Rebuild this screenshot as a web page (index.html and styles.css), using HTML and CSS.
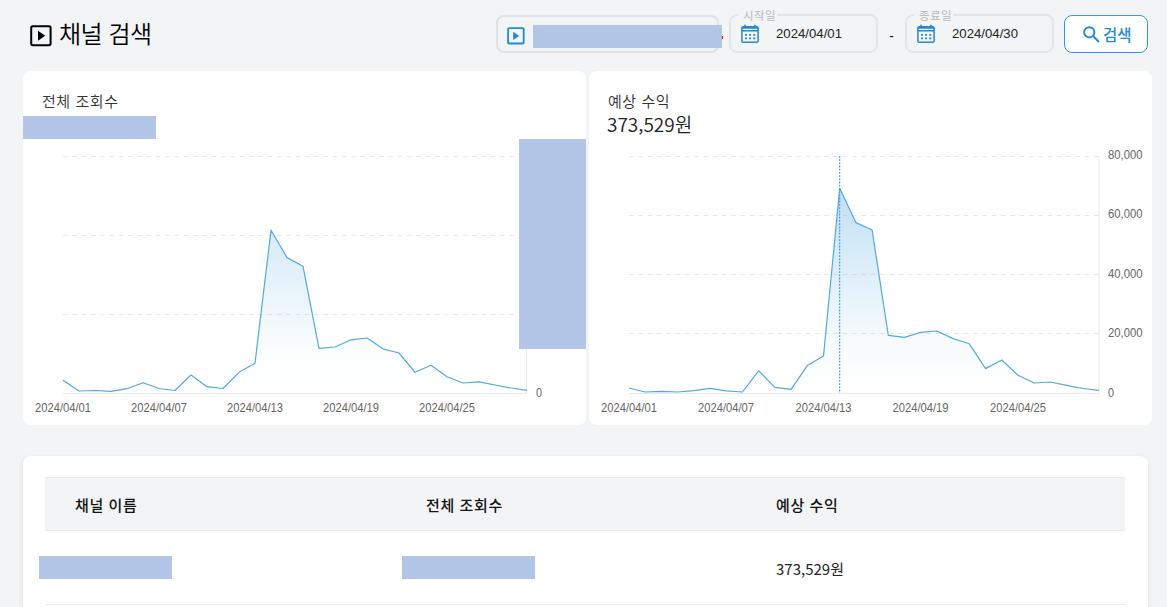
FILE: index.html
```html
<!DOCTYPE html>
<html lang="ko">
<head>
<meta charset="utf-8">
<title>채널 검색</title>
<link rel="stylesheet" href="styles.css">
</head>
<body>
<header class="topbar">
  <h1 class="title">
    <svg class="title-icon" width="22" height="22" viewBox="0 0 22 22"><rect x="1.2" y="1.2" width="19.4" height="19" rx="1.6" fill="none" stroke="#000" stroke-width="2"/><path d="M8 5.8v10l7.2-5z"/></svg>
    <span>채널 검색</span>
  </h1>
  <div class="filters">
    <div class="channel-field">
      <svg width="18" height="18" viewBox="0 0 18 18"><rect x="1.1" y="1.1" width="15.6" height="15.4" rx="1" fill="none" stroke="#2488d2" stroke-width="1.8"/><path d="M6.2 4.8v8.2l6-4.1z" fill="#2488d2"/></svg>
      <span class="mask channel-mask"></span>
      <i class="required"></i>
    </div>
    <fieldset class="date-field">
      <legend>시작일</legend>
      <svg width="18" height="20" viewBox="0 0 18 20"><use href="#calendar"/></svg>
      <span>2024/04/01</span>
    </fieldset>
    <span class="dash">-</span>
    <fieldset class="date-field">
      <legend>종료일</legend>
      <svg width="18" height="20" viewBox="0 0 18 20"><g id="calendar"><path d="M4 .8v3M14 .8v3" stroke="#2488d2" stroke-width="1.6"/><rect x=".9" y="2.7" width="16.2" height="15.6" rx="1.4" fill="none" stroke="#2488d2" stroke-width="1.5"/><path d="M1 3h16v1.7H1zM1 6h16v1.4H1z" fill="#2488d2"/><path d="M4 10.8h10.4M4 14.4h10.4" stroke="#2488d2" stroke-width="1.8" stroke-dasharray="2 2.1"/></g></svg>
      <span>2024/04/30</span>
    </fieldset>
    <button class="search">
      <svg width="17" height="17" viewBox="0 0 17 17" fill="none" stroke="#2488d2" stroke-width="2"><circle cx="6.3" cy="6.3" r="5.1"/><path d="M10 10l6 6"/></svg>
      <span>검색</span>
    </button>
  </div>
</header>

<section class="charts">
  <article class="card">
    <h2>전체 조회수</h2>
    <span class="mask total-mask"></span>
    <svg class="chart" width="563" height="284" viewBox="23 141 563 284">
      <defs><linearGradient id="views" gradientUnits="userSpaceOnUse" x1="0" y1="230" x2="0" y2="393"><stop offset="0" stop-color="#3498db" stop-opacity=".2"/><stop offset=".75" stop-color="#3498db" stop-opacity=".02"/><stop offset="1" stop-color="#3498db" stop-opacity="0"/></linearGradient></defs>
      <path class="grid" d="M63 156.5H527M63 235.5H527M63 314.5H527M63 393.5H527"/>
      <path class="axis" d="M526.5 156V393M63 393.5H527"/>
      <path fill="url(#views)" d="M63 380.3 79 391 95 390.5 111 391.4 127 388.7 143 382.7 159 388.5 175 390.5 191 375 207 386.7 223 388.5 239 372.3 255 363.3 271 230.2 287 257.6 303 266.3 319 348.3 335 347 351 339.8 367 338 383 348.8 399 353 415 372.3 431 365.3 447 376.7 463 383 479 381.8 495 385 511 388 527 390.3V393H63Z"/>
      <polyline class="line" points="63,380.3 79,391 95,390.5 111,391.4 127,388.7 143,382.7 159,388.5 175,390.5 191,375 207,386.7 223,388.5 239,372.3 255,363.3 271,230.2 287,257.6 303,266.3 319,348.3 335,347 351,339.8 367,338 383,348.8 399,353 415,372.3 431,365.3 447,376.7 463,383 479,381.8 495,385 511,388 527,390.3"/>
      <g class="labels">
        <text x="35" y="412" textLength="56" lengthAdjust="spacingAndGlyphs">2024/04/01</text>
        <text x="131" y="412" textLength="56" lengthAdjust="spacingAndGlyphs">2024/04/07</text>
        <text x="227" y="412" textLength="56" lengthAdjust="spacingAndGlyphs">2024/04/13</text>
        <text x="323" y="412" textLength="56" lengthAdjust="spacingAndGlyphs">2024/04/19</text>
        <text x="419" y="412" textLength="56" lengthAdjust="spacingAndGlyphs">2024/04/25</text>
        <text x="536" y="396.5" textLength="6" lengthAdjust="spacingAndGlyphs">0</text>
      </g>
    </svg>
    <span class="mask axis-mask"></span>
  </article>
  <article class="card">
    <h2>예상 수익</h2>
    <p class="amount">373,529원</p>
    <svg class="chart" width="563" height="284" viewBox="589 141 563 284">
      <defs><linearGradient id="revenue" gradientUnits="userSpaceOnUse" x1="0" y1="188" x2="0" y2="393"><stop offset="0" stop-color="#3498db" stop-opacity=".31"/><stop offset=".75" stop-color="#3498db" stop-opacity=".04"/><stop offset="1" stop-color="#3498db" stop-opacity="0"/></linearGradient></defs>
      <path class="grid" d="M629 156.5H1099M629 215.5H1099M629 274.5H1099M629 333.5H1099M629 393.5H1099"/>
      <path class="axis" d="M1099 156V393M629 393.5H1099"/>
      <path fill="url(#revenue)" d="M629 388 645.2 392 661.4 391.4 677.6 392 693.8 390.6 710 388.4 726.2 390.8 742.4 392 758.7 370.8 774.9 387.3 791.1 389.3 807.3 365.6 823.5 356 839.7 188.3 855.9 222.6 872.1 230 888.3 335.3 904.5 337.4 920.7 332.3 936.9 331 953.1 338.6 969.3 343.8 985.6 368.6 1001.8 360 1018 375.3 1034.2 383 1050.4 382 1066.6 385.3 1082.8 388.5 1099 390.3V393H629Z"/>
      <polyline class="line" points="629,388 645.2,392 661.4,391.4 677.6,392 693.8,390.6 710,388.4 726.2,390.8 742.4,392 758.7,370.8 774.9,387.3 791.1,389.3 807.3,365.6 823.5,356 839.7,188.3 855.9,222.6 872.1,230 888.3,335.3 904.5,337.4 920.7,332.3 936.9,331 953.1,338.6 969.3,343.8 985.6,368.6 1001.8,360 1018,375.3 1034.2,383 1050.4,382 1066.6,385.3 1082.8,388.5 1099,390.3"/>
      <path class="cursor" d="M839.6 156V393"/>
      <g class="labels">
        <text x="601" y="412" textLength="56" lengthAdjust="spacingAndGlyphs">2024/04/01</text>
        <text x="698" y="412" textLength="56" lengthAdjust="spacingAndGlyphs">2024/04/07</text>
        <text x="795.5" y="412" textLength="56" lengthAdjust="spacingAndGlyphs">2024/04/13</text>
        <text x="892.5" y="412" textLength="56" lengthAdjust="spacingAndGlyphs">2024/04/19</text>
        <text x="990" y="412" textLength="56" lengthAdjust="spacingAndGlyphs">2024/04/25</text>
        <text x="1108" y="159" textLength="34.5" lengthAdjust="spacingAndGlyphs">80,000</text>
        <text x="1108" y="218" textLength="34.5" lengthAdjust="spacingAndGlyphs">60,000</text>
        <text x="1108" y="278" textLength="34.5" lengthAdjust="spacingAndGlyphs">40,000</text>
        <text x="1108" y="337" textLength="34.5" lengthAdjust="spacingAndGlyphs">20,000</text>
        <text x="1108" y="396.5" textLength="6" lengthAdjust="spacingAndGlyphs">0</text>
      </g>
    </svg>
  </article>
</section>

<section class="table-card">
  <div class="row head"><span>채널 이름</span><span>전체 조회수</span><span>예상 수익</span></div>
  <div class="row"><span><i class="mask cell-mask name-mask"></i></span><span><i class="mask cell-mask views-mask"></i></span><span>373,529원</span></div>
</section>
</body>
</html>
```
FILE: styles.css
```css
* { box-sizing: border-box; }
body {
  margin: 0;
  height: 607px;
  overflow: hidden;
  background: #f2f4f6;
  color: #222;
  font-family: "Noto Sans CJK KR", sans-serif;
}
h1, h2, p { margin: 0; }
.mask { display: block; background: #b4c6e7; }

.topbar {
  height: 71px;
  padding: 0 19px 0 30px;
  display: flex;
  justify-content: space-between;
}
.title {
  display: flex;
  gap: 7px;
  padding-top: 15px;
  font-size: 24px;
  line-height: 36px;
  letter-spacing: -.5px;
  font-weight: 350;
  color: #000;
}
.title-icon { margin-top: 10px; }
.filters { display: flex; padding-top: 8px; height: 53px; }
.channel-field {
  display: flex;
  width: 223px;
  height: 38px;
  margin: 7px 10px 0 0;
  padding: 8px 0 0 10px;
  border: 2px solid #dfe1e5;
  border-radius: 8px;
}
.channel-field svg { flex: none; margin: 2px 0 0 -1px; }
.channel-mask { flex: none; width: 189px; height: 23px; margin: 0 0 0 8px; z-index: 1; }
.required { flex: none; width: 1px; height: 3px; margin-top: 11px; background: #f00; }
.date-field {
  display: flex;
  width: 149px;
  height: 46px;
  margin: -1px 0 0;
  padding: 1px 0 0 10px;
  border: 2px solid #e3e5e8;
  border-radius: 8px;
  font: 13.2px/20px "Liberation Sans", sans-serif;
}
.date-field legend {
  margin-left: -3px;
  padding: 0 1px 0 5px;
  font: 11.5px/16px "Noto Sans CJK KR", sans-serif;
  letter-spacing: .4px;
  color: #b8b8b8;
}
.date-field svg { flex: none; }
.date-field span { margin: 0 0 0 17px; }
.dash { width: 27px; padding-top: 18px; text-align: center; font: 14px/20px "Liberation Sans", sans-serif; }
.search {
  display: flex;
  gap: 4px;
  width: 84px;
  height: 38px;
  margin: 7px 0 0 10px;
  padding: 9px 0 0 18px;
  border: 1px solid #3498db;
  border-radius: 8px;
  background: #fff;
  color: #2488d2;
  font: 500 15.5px/19px "Noto Sans CJK KR", sans-serif;
}
.search span { margin-left: -1px; }
.search svg { margin-top: 1px; }

.charts { display: flex; gap: 3px; padding-left: 23px; }
.card {
  position: relative;
  width: 563px;
  height: 354px;
  padding-top: 18px;
  border-radius: 8px;
  background: #fff;
  display: flex;
  flex-direction: column;
}
.card h2 {
  padding-left: 19px;
  height: 24px;
  font-size: 15px;
  line-height: 24px;
  letter-spacing: .55px;
  font-weight: 350;
  color: #333;
}
.amount { height: 28px; padding-left: 18px; font-size: 19px; line-height: 22px; font-weight: 350; }
.total-mask { width: 133px; height: 23px; margin: 3px 0 2px; }
.chart { display: block; flex: none; }
.axis-mask { position: absolute; right: 0; top: 68px; width: 67px; height: 210px; }
.grid { fill: none; stroke: #e6e6e6; stroke-dasharray: 4.5 4.8; }
.axis { fill: none; stroke: #e9e9eb; }
.line { fill: none; stroke: #53a9df; stroke-width: 1.2; stroke-linejoin: round; }
.cursor { fill: none; stroke: #4c9fd8; stroke-width: 1.3; stroke-dasharray: 1.8 1.4; }
.labels { font: 12.4px "Liberation Sans", sans-serif; fill: #666; }

.table-card {
  width: 1125px;
  height: 170px;
  margin: 31px 0 0 23px;
  padding: 21px 23px 0 22px;
  border-radius: 8px;
  background: #fff;
  box-shadow: 0 2px 5px rgba(0, 0, 0, .1);
}
.row {
  display: grid;
  grid-template-columns: 351px 350px 1fr;
  height: 74px;
  padding-left: 30px;
  border-bottom: 1px solid #e8eaed;
  font-size: 15px;
  line-height: 75px;
}
.head {
  height: 54px;
  border-top: 1px solid #e8eaed;
  background: #f2f4f6;
  line-height: 54px;
  letter-spacing: .6px;
  font-weight: 500;
  color: #111;
}
.cell-mask { width: 133px; height: 23px; margin-top: 25px; }
.name-mask { margin-left: -36px; }
.views-mask { margin-left: -24px; }
```
